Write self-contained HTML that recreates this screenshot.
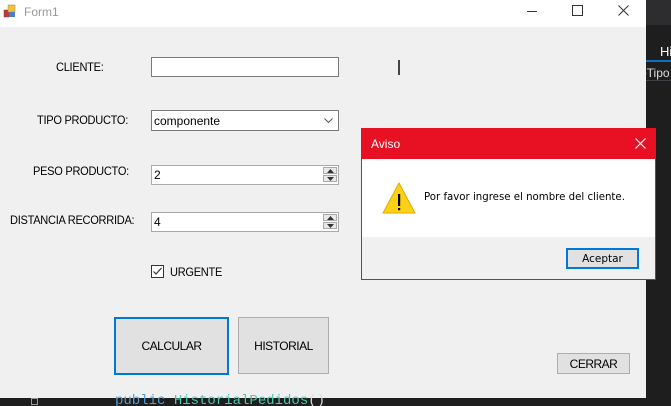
<!DOCTYPE html>
<html><head><style>
html,body{margin:0;width:671px;height:406px;overflow:hidden;}
body{position:relative;background:#1e1e1e;font-family:"Liberation Sans",sans-serif;font-size:12px;}
.a{position:absolute;}
.lbl{position:absolute;font-size:12px;color:#000;letter-spacing:-0.3px;transform:scaleX(0.92);transform-origin:0 0;white-space:nowrap}
.box{position:absolute;background:#fff;border:1px solid #7a7a7a;box-sizing:border-box;}
.btn{position:absolute;background:#e1e1e1;border:1px solid #adadad;box-sizing:border-box;display:flex;align-items:center;justify-content:center;font-size:12px;letter-spacing:-0.5px}
.spin{position:absolute;right:1px;top:1px;width:14px;height:16px;}
.sb{height:7px;border:1px solid #aaa;background:#e8e8e8;box-sizing:border-box;position:relative}
</style></head><body>
<div class="a" style="left:0;top:0;width:646px;height:398px;background:#f0f0f0"></div>
<div class="a" style="left:0;top:0;width:646px;height:27px;background:#fff"></div>
<svg class="a" style="left:3px;top:4px" width="14" height="14"><rect x="1" y="6" width="5" height="7" fill="#c33" stroke="#555" stroke-width=".5"/><rect x="5" y="1" width="7" height="7" fill="#f4c430" stroke="#888" stroke-width=".5"/><rect x="6" y="8" width="6" height="5" fill="#4a7fd0"/></svg>
<div class="a" style="left:24px;top:5px;color:#999;font-size:12px">Form1</div>
<div class="a" style="left:527px;top:11px;width:10px;height:1px;background:#333"></div>
<div class="a" style="left:572px;top:5px;width:9px;height:9px;border:1px solid #333"></div>
<svg class="a" style="left:618px;top:5px" width="11" height="11"><path d="M0.5 0.5L10.5 10.5M10.5 0.5L0.5 10.5" stroke="#333" stroke-width="1"/></svg>
<!-- IDE bits -->
<div class="a" style="left:646px;top:0;width:25px;height:25px;background:#2d2d30"></div>
<div class="a" style="left:660px;top:44px;color:#fff;font-size:13px">Hi</div>
<div class="a" style="left:646px;top:60px;width:25px;height:2px;background:#0e70c0"></div>
<div class="a" style="left:646px;top:66px;width:25px;height:14px;overflow:hidden"><div style="position:absolute;left:-6px;top:0;color:#ddd;font-size:12px;white-space:nowrap">bTipo</div></div>
<div class="a" style="left:646px;top:80px;width:25px;height:1px;background:#3f3f46"></div>
<div class="a" style="left:115px;top:393px;color:#569cd6;font-family:'Liberation Mono',monospace;font-size:14px">public <span style="color:#4ec9b0">HistorialPedidos</span><span style="color:#ddd">()</span></div>
<div class="a" style="left:31px;top:398px;width:7px;height:7px;border:1px solid #999;box-sizing:border-box"></div>

<div class="lbl" style="left:56px;top:60px">CLIENTE:</div>
<div class="box" style="left:151px;top:57px;width:188px;height:20px"></div>
<div class="a" style="left:398px;top:60px;width:2px;height:15px;background:#444"></div>

<div class="lbl" style="left:37px;top:113px">TIPO PRODUCTO:</div>
<div class="box" style="left:151px;top:110px;width:188px;height:21px"><span style="position:absolute;left:2px;top:3px;font-size:12px">componente</span>
<svg style="position:absolute;right:5px;top:7px" width="9" height="6"><path d="M0.5 0.5L4.5 4.5L8.5 0.5" stroke="#555" fill="none"/></svg></div>

<div class="lbl" style="left:33px;top:164px">PESO PRODUCTO:</div>
<div class="box" style="left:151px;top:165px;width:188px;height:20px;border-color:#aaa"><span style="position:absolute;left:2px;top:2px">2</span>
<div class="spin"><div class="sb" style="margin-bottom:1px"><svg style="position:absolute;left:3px;top:1px" width="7" height="4"><path d="M3.5 0L7 4H0Z" fill="#333"/></svg></div><div class="sb"><svg style="position:absolute;left:3px;top:1px" width="7" height="4"><path d="M0 0H7L3.5 4Z" fill="#333"/></svg></div></div></div>

<div class="lbl" style="left:10px;top:213px">DISTANCIA RECORRIDA:</div>
<div class="box" style="left:151px;top:212px;width:188px;height:20px;border-color:#aaa"><span style="position:absolute;left:2px;top:2px">4</span>
<div class="spin"><div class="sb" style="margin-bottom:1px"><svg style="position:absolute;left:3px;top:1px" width="7" height="4"><path d="M3.5 0L7 4H0Z" fill="#333"/></svg></div><div class="sb"><svg style="position:absolute;left:3px;top:1px" width="7" height="4"><path d="M0 0H7L3.5 4Z" fill="#333"/></svg></div></div></div>

<div class="a" style="left:151px;top:265px;width:13px;height:13px;border:1px solid #333;background:#fff;box-sizing:border-box"></div>
<svg class="a" style="left:152px;top:266px" width="11" height="11"><path d="M1.5 5.5L4 8L9.5 2" stroke="#333" fill="none" stroke-width="1.2"/></svg>
<div class="lbl" style="left:170px;top:265px">URGENTE</div>

<div class="btn" style="left:114px;top:317px;width:115px;height:58px;border:2px solid #0078d7">CALCULAR</div>
<div class="btn" style="left:238px;top:317px;width:91px;height:57px">HISTORIAL</div>
<div class="btn" style="left:557px;top:353px;width:73px;height:21px">CERRAR</div>

<!-- dialog -->
<div class="a" style="left:361px;top:128px;width:295px;height:152px;border:1px solid #e81123;box-sizing:border-box;background:#f0f0f0"></div>
<div class="a" style="left:361px;top:128px;width:295px;height:31px;background:#e81123"></div>
<div class="a" style="left:371px;top:137px;color:#fff;font-size:12px">Aviso</div>
<svg class="a" style="left:635px;top:138px" width="11" height="11"><path d="M0.5 0.5L10.5 10.5M10.5 0.5L0.5 10.5" stroke="#fff" stroke-width="1.2"/></svg>
<div class="a" style="left:362px;top:159px;width:293px;height:78px;background:#fff"></div>
<svg class="a" style="left:382px;top:181px" width="34" height="34"><path d="M17 2L33 32H1Z" fill="#fcd116" stroke="#e0a800" stroke-width="1"/><rect x="16" y="13" width="2.2" height="12" fill="#000"/><rect x="16" y="27" width="2.2" height="2.2" fill="#000"/></svg>
<div class="a" style="left:424px;top:192px;font-family:'DejaVu Sans',sans-serif;font-size:10.2px">Por favor ingrese el nombre del cliente.</div>
<div class="btn" style="left:566px;top:248px;width:73px;height:21px;border:2px solid #0078d7;font-family:'DejaVu Sans',sans-serif;font-size:10.5px;letter-spacing:0">Aceptar</div>
</body></html>
